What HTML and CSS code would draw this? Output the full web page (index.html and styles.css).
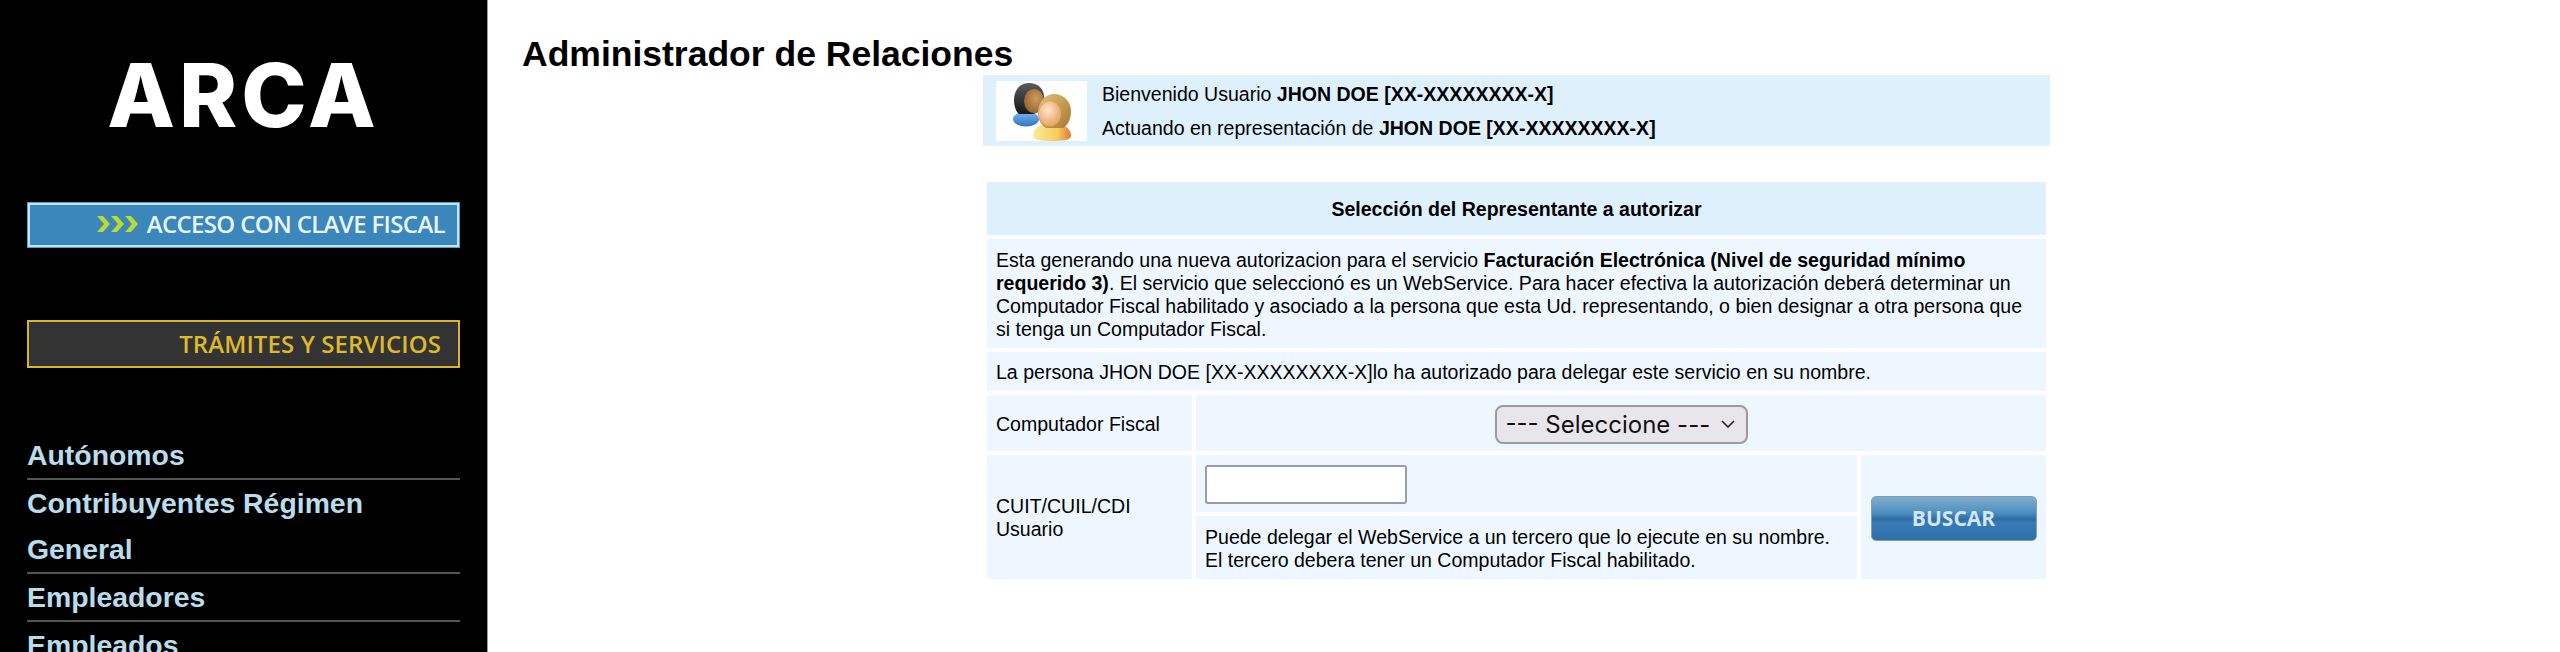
FILE: index.html
```html
<!DOCTYPE html>
<html lang="es">
<head>
    <meta charset="UTF-8">
    <title>Administrador de Relaciones</title>
    <link rel="stylesheet" href="styles.css">
</head>
<body>
    <aside class="sidebar">
        <div class="logo">ARCA</div>
        <a class="btn_clave" href="#">
            <svg class="chevrons" width="42" height="16" viewBox="0 0 42 16">
                <path d="M0 0h6l7 8-7 8H0l7-8z"/>
                <path d="M14 0h6l7 8-7 8h-6l7-8z"/>
                <path d="M28 0h6l7 8-7 8h-6l7-8z"/>
            </svg>
            ACCESO CON CLAVE FISCAL
        </a>
        <a class="btn_tramites" href="#">TRÁMITES Y SERVICIOS</a>
        <ul class="menu">
            <li><a href="#">Autónomos</a></li>
            <li><a href="#">Contribuyentes Régimen General</a></li>
            <li><a href="#">Empleadores</a></li>
            <li><a href="#">Empleados</a></li>
        </ul>
    </aside>

    <main class="content">
        <h1 class="page_title">Administrador de Relaciones</h1>

        <div class="welcome">
            <div class="avatar">
                <svg width="91" height="60" viewBox="0 0 91 60">
                    <defs>
                        <linearGradient id="hair1" x1="0" y1="0" x2="0" y2="1">
                            <stop offset="0" stop-color="#5a5b5f"/>
                            <stop offset="1" stop-color="#17171a"/>
                        </linearGradient>
                        <radialGradient id="face1" cx="0.6" cy="0.4" r="0.7">
                            <stop offset="0" stop-color="#d19a5a"/>
                            <stop offset="1" stop-color="#8f5f2c"/>
                        </radialGradient>
                        <linearGradient id="body1" x1="0" y1="0" x2="0" y2="1">
                            <stop offset="0" stop-color="#7db8ee"/>
                            <stop offset="1" stop-color="#2f74c4"/>
                        </linearGradient>
                        <linearGradient id="hair2" x1="0" y1="0" x2="1" y2="1">
                            <stop offset="0" stop-color="#e3c27a"/>
                            <stop offset="1" stop-color="#a9772f"/>
                        </linearGradient>
                        <radialGradient id="face2" cx="0.4" cy="0.35" r="0.75">
                            <stop offset="0" stop-color="#fde6ca"/>
                            <stop offset="1" stop-color="#e39a55"/>
                        </radialGradient>
                        <linearGradient id="body2" x1="0" y1="0" x2="1" y2="0">
                            <stop offset="0" stop-color="#fdeb96"/>
                            <stop offset="0.65" stop-color="#f8cb5e"/>
                            <stop offset="1" stop-color="#dd7a35"/>
                        </linearGradient>
                    </defs>
                    <ellipse fill="url(#body1)" cx="30" cy="38" rx="13" ry="7.5"/>
                    <path fill="url(#hair1)" d="M33 2c9 0 15 6 15 14 0 7-4 16-11 17H23c-3-2-5-8-5-14C18 9 24 2 33 2z"/>
                    <ellipse fill="url(#face1)" cx="38" cy="20" rx="10" ry="12"/>
                    <path fill="url(#body2)" d="M37 55c0-7 6-12 14-12h10c8 0 14 5 14 12 0 4-8 5-19 5s-19-1-19-5z"/>
                    <path fill="url(#hair2)" d="M58 13c10 0 17 8 17 17 0 8-3 14-8 17H50c-5-3-8-8-8-15 0-11 7-19 16-19z"/>
                    <ellipse fill="url(#face2)" cx="54" cy="33" rx="11" ry="12.5"/>
                </svg>
            </div>
            <div class="welcome_text">
                <p>Bienvenido Usuario <b>JHON DOE [XX-XXXXXXXX-X]</b></p>
                <p>Actuando en representación de <b>JHON DOE [XX-XXXXXXXX-X]</b></p>
            </div>
        </div>

        <table class="form_table">
            <tr>
                <th colspan="3">Selección del Representante a autorizar</th>
            </tr>
            <tr>
                <td colspan="3">Esta generando una nueva autorizacion para el servicio <b>Facturación Electrónica (Nivel de seguridad mínimo requerido 3)</b>. El servicio que seleccionó es un WebService. Para hacer efectiva la autorización deberá determinar un Computador Fiscal habilitado y asociado a la persona que esta Ud. representando, o bien designar a otra persona que si tenga un Computador Fiscal.</td>
            </tr>
            <tr>
                <td colspan="3">La persona JHON DOE [XX-XXXXXXXX-X]lo ha autorizado para delegar este servicio en su nombre.</td>
            </tr>
            <tr class="row_select">
                <td class="col_label">Computador Fiscal</td>
                <td colspan="2" class="center">
                    <select class="select_cf">
                        <option>--- Seleccione ---</option>
                    </select>
                </td>
            </tr>
            <tr class="row_input">
                <td class="col_label" rowspan="2">CUIT/CUIL/CDI Usuario</td>
                <td class="col_input"><input type="text" class="input_cuit"></td>
                <td class="col_btn" rowspan="2"><a class="btn_buscar" href="#">BUSCAR</a></td>
            </tr>
            <tr>
                <td class="help">Puede delegar el WebService a un tercero que lo ejecute en su nombre.<br>El tercero debera tener un Computador Fiscal habilitado.</td>
            </tr>
        </table>
    </main>
</body>
</html>
```

FILE: styles.css
```css
*{
    padding: 0;
    margin: 0;
    box-sizing: border-box;
}
ul{
    list-style-type: none;
}
a{
    text-decoration: none;
}
html, body{
    height: 652px;
    overflow: hidden;
}
body{
    display: flex;
    background: #fff;
    color: #000;
    font-family: 'Liberation Sans', Arial, sans-serif;
    font-size: 19.55px;
}

/* sidebar */
.sidebar{
    flex: 0 0 488px;
    height: 652px;
    overflow: hidden;
    padding: 0 27px;
    background: #000;
    border-right: 1px solid #999;
}
.logo{
    height: 202px;
    padding-top: 37px;
    color: #fff;
    font-family: 'Inter', sans-serif;
    font-size: 88px;
    font-weight: 800;
    line-height: 116px;
    letter-spacing: 4px;
    text-align: center;
    white-space: nowrap;
}
.btn_clave, .btn_tramites{
    display: flex;
    align-items: center;
    justify-content: flex-end;
    font-family: 'Open Sans', sans-serif;
    font-weight: 600;
    white-space: nowrap;
}
.btn_clave{
    width: 433px;
    height: 46px;
    padding: 0 14px 3px 0;
    background: #3b86bb;
    border: 1px solid #4da3d4;
    outline: 2px solid #bfe6f5;
    outline-offset: -3px;
    color: #e6f5fb;
    font-size: 24px;
    letter-spacing: -0.65px;
}
.chevrons{
    margin-right: 8px;
    fill: #bcd92f;
}
.btn_tramites{
    width: 433px;
    height: 48px;
    margin-top: 72px;
    padding: 0 17px 1px 0;
    background: #333;
    border: 2px solid #d8b42a;
    color: #dfb92c;
    font-size: 24px;
    letter-spacing: 0.1px;
}
.menu{
    margin-top: 64px;
}
.menu li{
    border-bottom: 2px solid #555;
}
.menu a{
    display: block;
    color: #b9dcea;
    font-size: 28.4px;
    font-weight: bold;
    line-height: 46px;
}

/* content */
.content{
    flex: 1;
    padding-left: 34px;
}
.page_title{
    padding-top: 34px;
    font-size: 35.5px;
    line-height: 41px;
}
.welcome{
    display: flex;
    align-items: center;
    width: 1067px;
    height: 71px;
    margin-left: 461px;
    padding-left: 13px;
    background: #dff0fd;
}
.avatar{
    width: 91px;
    height: 60px;
    background: #fff;
}
.welcome_text{
    padding-left: 15px;
    line-height: 34px;
}
.form_table{
    width: 1067px;
    margin: 32px 0 0 461px;
    border-collapse: separate;
    border-spacing: 4px;
    line-height: 23px;
}
.form_table th, .form_table td{
    padding: 2px 9px 0;
    background: #eef7ff;
    vertical-align: middle;
}
.form_table th{
    height: 53px;
    background: #dff0fd;
    text-align: center;
}
.form_table tr:nth-child(2) td{
    height: 109px;
}
.form_table tr:nth-child(3) td{
    height: 39px;
}
.row_select td{
    height: 56px;
}
.center{
    text-align: center;
}
.col_label{
    width: 205px;
}
.row_input .col_input{
    height: 57px;
}
.col_btn{
    width: 185px;
    text-align: center;
}
.select_cf{
    appearance: none;
    width: 253px;
    height: 39px;
    padding: 0 0 0 9px;
    background: #e8e6eb url("data:image/svg+xml,%3Csvg xmlns='http://www.w3.org/2000/svg' width='14' height='8'%3E%3Cpath d='M1 1l6 6 6-6' fill='none' stroke='%23222' stroke-width='1.6'/%3E%3C/svg%3E") no-repeat right 11px center;
    border: 2px solid #9a9aa2;
    border-radius: 8px;
    color: #111;
    font-family: 'Inter', sans-serif;
    font-size: 24px;
    vertical-align: middle;
}
.input_cuit{
    display: block;
    width: 202px;
    height: 39px;
    background: #fff;
    border: 2px solid #9a9aa8;
    border-radius: 3px;
    outline: 0;
}
.help{
    height: 63px;
}
.btn_buscar{
    display: block;
    width: 166px;
    height: 45px;
    margin: 0 auto;
    background: linear-gradient(#84adcb, #4f91c3 35%, #2e6da6 52%, #3a7bb6 60%, #2f6fa8);
    border: 1px solid #7f9fb8;
    border-radius: 5px;
    color: #d2e5f2;
    font-family: 'Open Sans', sans-serif;
    font-size: 21px;
    font-weight: 700;
    line-height: 43px;
}
```
